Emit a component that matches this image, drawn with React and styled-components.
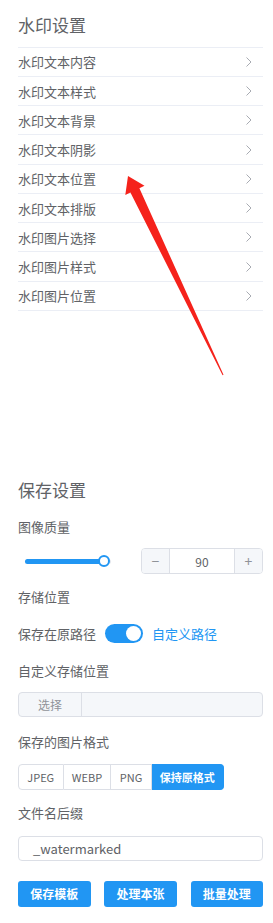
import React from "react";
import styled, { createGlobalStyle } from "styled-components";

const Global = createGlobalStyle`
  html, body { margin: 0; padding: 0; background: #fff; }
  body { font-family: "Noto Sans CJK SC", "Noto Sans", sans-serif; }
  * { box-sizing: border-box; }
`;

const BLUE = "#2196f3";
const TEXT = "#606266";
const BORDER = "#dcdfe6";

const Page = styled.div`
  position: relative;
  width: 273px;
  padding: 13px 10px 16px 18px;
`;

const Title = styled.div`
  font-size: 17px;
  line-height: 24px;
  color: ${TEXT};
  margin-top: ${(p) => p.$mt || 0}px;
`;

const List = styled.div`
  margin-top: 9.7px;
  border-top: 1px solid #ebeef5;
`;

const Row = styled.div`
  height: 29.26px;
  border-bottom: 1px solid #ebeef5;
  display: flex;
  align-items: center;
  justify-content: space-between;
  padding-right: 11px;
  font-size: 13px;
  color: ${TEXT};
`;

const Label = styled.div`
  font-size: 13px;
  line-height: 20px;
  color: ${TEXT};
  margin-top: ${(p) => p.$mt || 0}px;
`;

const Line = styled.div`
  display: flex;
  align-items: center;
  justify-content: ${(p) => p.$justify || "flex-start"};
  height: ${(p) => p.$h || 20}px;
  margin-top: ${(p) => p.$mt || 0}px;
`;

const Slider = styled.div`
  position: relative;
  width: 86px;
  height: 5px;
  margin-left: 7px;
  border-radius: 3px;
  background: #e4e7ed;
`;

const SliderFill = styled.div`
  height: 100%;
  border-radius: 3px;
  background: ${BLUE};
`;

const SliderThumb = styled.div`
  position: absolute;
  top: 50%;
  width: 12px;
  height: 12px;
  margin: -6px 0 0 -6px;
  border-radius: 50%;
  background: #fff;
  border: 2px solid ${BLUE};
`;

const NumberBox = styled.div`
  display: flex;
  width: 122px;
  height: 26px;
  border: 1px solid ${BORDER};
  border-radius: 4px;
  overflow: hidden;
`;

const StepBtn = styled.div`
  width: 28px;
  flex: none;
  display: flex;
  align-items: center;
  justify-content: center;
  background: #f5f7fa;
  color: #909399;
  font-size: 14px;
  border-${(p) => p.$side}: 1px solid ${BORDER};
`;

const NumberValue = styled.div`
  flex: 1;
  display: flex;
  align-items: center;
  justify-content: center;
  font-size: 12px;
  color: ${TEXT};
`;

const SwitchText = styled.span`
  font-size: 13px;
  color: ${(p) => (p.$active ? BLUE : TEXT)};
`;

const Switch = styled.div`
  position: relative;
  width: 38px;
  height: 19px;
  margin: 0 9px 0 9px;
  border-radius: 10px;
  background: ${BLUE};
`;

const Knob = styled.div`
  position: absolute;
  top: 2px;
  right: 2px;
  width: 15px;
  height: 15px;
  border-radius: 50%;
  background: #fff;
`;

const InputGroup = styled.div`
  display: flex;
  height: 25px;
  margin-top: ${(p) => p.$mt || 0}px;
  border: 1px solid ${BORDER};
  border-radius: 4px;
  background: #f5f7fa;
  overflow: hidden;
`;

const GroupBtn = styled.div`
  width: 63px;
  display: flex;
  align-items: center;
  justify-content: center;
  border-right: 1px solid ${BORDER};
  font-size: 12px;
  color: #909399;
`;

const RadioGroup = styled.div`
  display: flex;
  height: 25.7px;
  margin-top: ${(p) => p.$mt || 0}px;
`;

const RadioBtn = styled.div`
  display: flex;
  align-items: center;
  padding: 0 8.3px;
  font-size: 11px;
  color: ${(p) => (p.$active ? "#fff" : TEXT)};
  background: ${(p) => (p.$active ? BLUE : "#fff")};
  border: 1px solid ${(p) => (p.$active ? BLUE : BORDER)};
  border-left-width: ${(p) => (p.$first ? 1 : 0)}px;
  font-weight: ${(p) => (p.$active ? 700 : 400)};
  &:first-child { border-radius: 4px 0 0 4px; }
  &:last-child { border-radius: 0 4px 4px 0; }
`;

const TextInput = styled.div`
  height: 25.3px;
  margin-top: ${(p) => p.$mt || 0}px;
  border: 1px solid ${BORDER};
  border-radius: 4px;
  display: flex;
  align-items: center;
  padding-left: 14px;
  font-size: 13px;
  color: ${TEXT};
`;

const Actions = styled.div`
  display: flex;
  justify-content: space-between;
  margin-top: 20px;
`;

const Action = styled.div`
  width: 72.5px;
  height: 25.7px;
  display: flex;
  align-items: center;
  justify-content: center;
  border-radius: 3px;
  background: ${BLUE};
  color: #fff;
  font-size: 12px;
  font-weight: 700;
`;

const Overlay = styled.svg`
  position: absolute;
  left: 0;
  top: 0;
  pointer-events: none;
`;

const Chevron = () => (
  <svg width="6" height="10" viewBox="0 0 6 10">
    <polyline points="0.5,0.5 5,5 0.5,9.5" fill="none" stroke="#a8abb2" strokeWidth="1" />
  </svg>
);

const items = [
  "水印文本内容",
  "水印文本样式",
  "水印文本背景",
  "水印文本阴影",
  "水印文本位置",
  "水印文本排版",
  "水印图片选择",
  "水印图片样式",
  "水印图片位置",
];

const formats = ["JPEG", "WEBP", "PNG", "保持原格式"];

export default function App() {
  const value = 90;
  const pct = Math.min(100, value * 1.02);
  return (
    <>
      <Global />
      <Page>
        <Title>水印设置</Title>
        <List>
          {items.map((t) => (
            <Row key={t}>
              <span>{t}</span>
              <Chevron />
            </Row>
          ))}
        </List>

        <Title $mt={167}>保存设置</Title>
        <Label $mt={14.7}>图像质量</Label>
        <Line $justify="space-between" $h={26} $mt={11.8}>
          <Slider>
            <SliderFill style={{ width: `${pct}%` }} />
            <SliderThumb style={{ left: `${pct}%` }} />
          </Slider>
          <NumberBox>
            <StepBtn $side="right">−</StepBtn>
            <NumberValue>{value}</NumberValue>
            <StepBtn $side="left">+</StepBtn>
          </NumberBox>
        </Line>

        <Label $mt={12.8}>存储位置</Label>
        <Line $mt={16}>
          <SwitchText>保存在原路径</SwitchText>
          <Switch>
            <Knob />
          </Switch>
          <SwitchText $active>自定义路径</SwitchText>
        </Line>

        <Label $mt={17.4}>自定义存储位置</Label>
        <InputGroup $mt={11.6}>
          <GroupBtn>选择</GroupBtn>
        </InputGroup>

        <Label $mt={14.4}>保存的图片格式</Label>
        <RadioGroup $mt={12.3}>
          {formats.map((f, i) => (
            <RadioBtn key={f} $first={i === 0} $active={i === 3}>
              {f}
            </RadioBtn>
          ))}
        </RadioGroup>

        <Label $mt={13.6}>文件名后缀</Label>
        <TextInput $mt={12.4}>_watermarked</TextInput>

        <Actions>
          <Action>保存模板</Action>
          <Action>处理本张</Action>
          <Action>批量处理</Action>
        </Actions>

        <Overlay width="273" height="923" viewBox="0 0 273 923">
          <polygon
            points="128,176 144.5,185.8 139.4,188.3 223.5,374.8 222.6,375.2 130.4,192.5 125.3,195"
            fill="#f5221b"
          />
        </Overlay>
      </Page>
    </>
  );
}
